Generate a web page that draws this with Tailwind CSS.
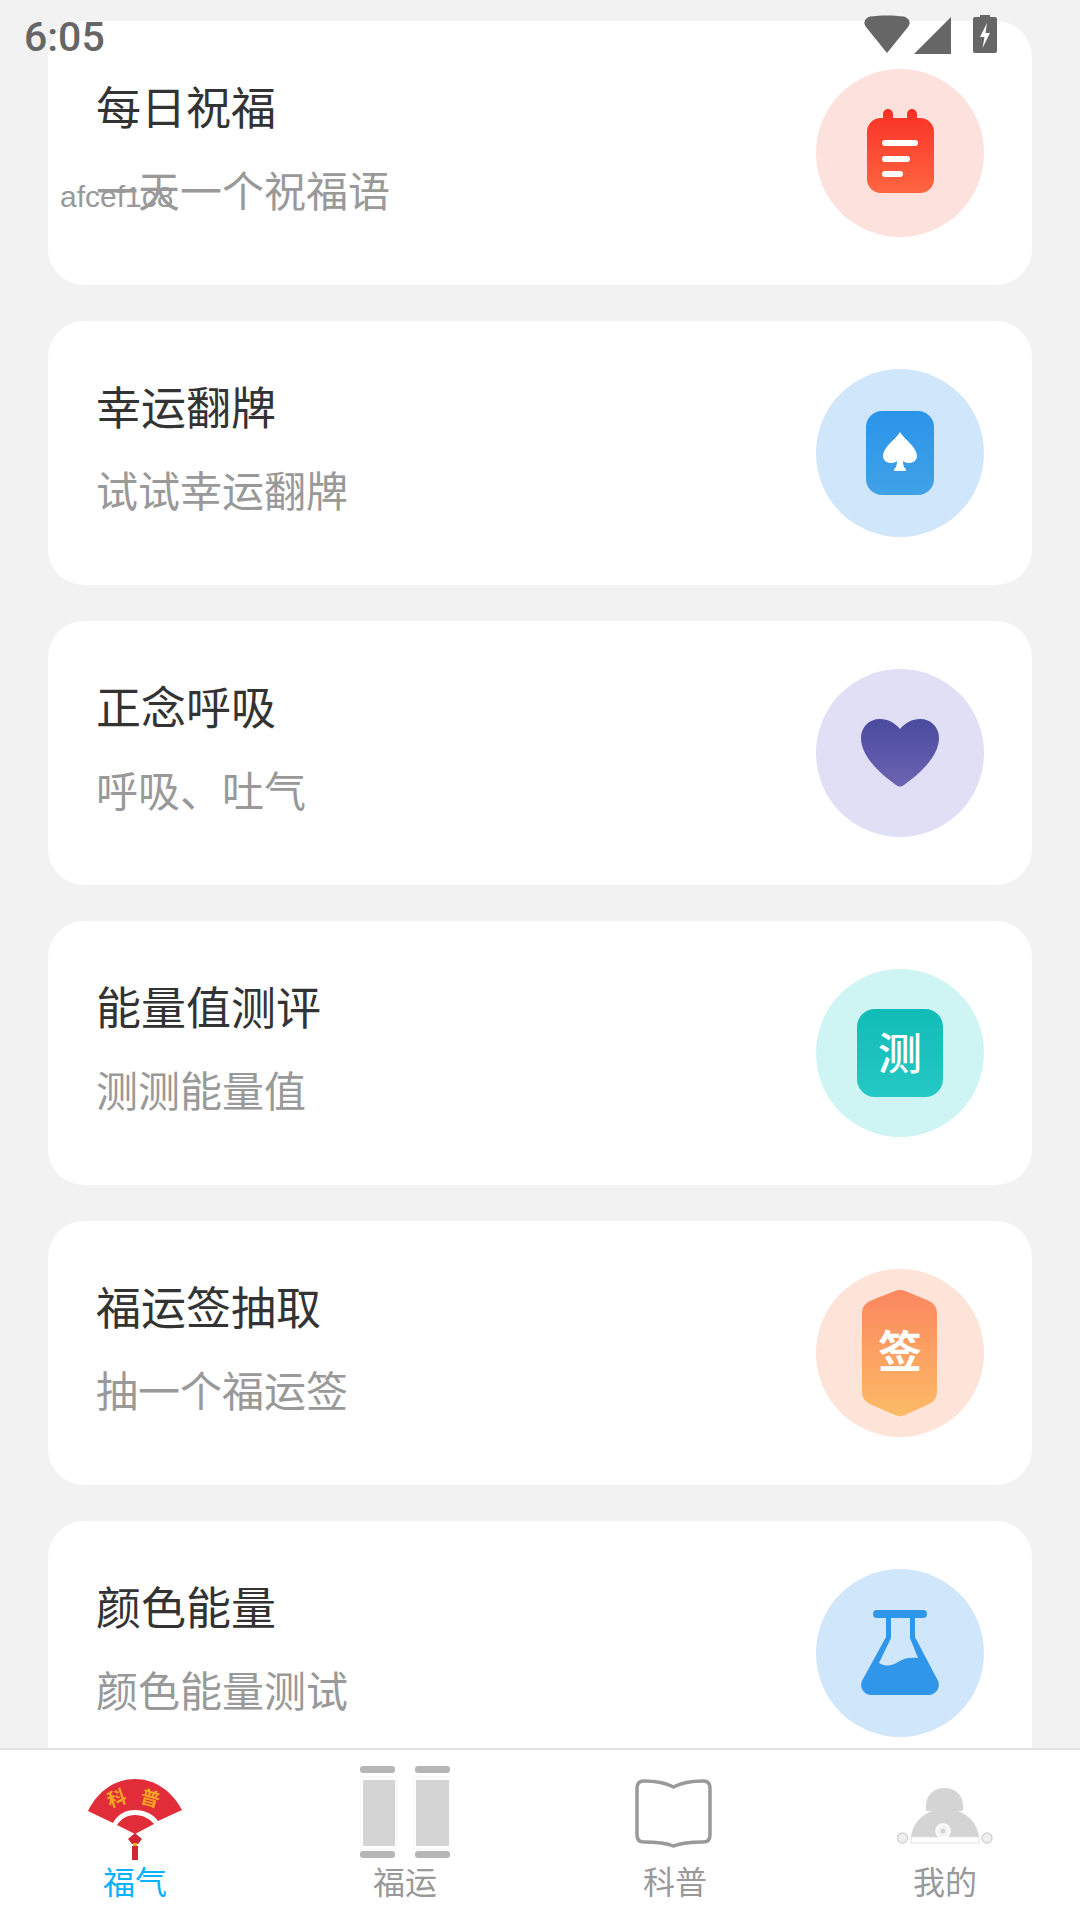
<!DOCTYPE html>
<html lang="zh-CN">
<head>
<meta charset="utf-8">
<title>福气</title>
<script src="https://cdn.jsdelivr.net/npm/@tailwindcss/browser@4"></script>
</head>
<body class="bg-[#f2f2f2] font-['Noto_Sans_CJK_SC',sans-serif]">
<div class="relative flex flex-col w-[1080px] h-[1920px] overflow-hidden">

  <!-- status bar, floats over the list -->
  <div class="absolute top-0 left-0 z-10 w-full h-[70px]">
    <span class="absolute left-[24px] top-[12px] text-[41px] leading-[50px] font-medium text-[#666] font-['Roboto',sans-serif]">6:05</span>
    <svg class="absolute left-[860px] top-[12px]" width="142" height="46" viewBox="0 0 142 46" fill="#666">
      <path d="M27 41 L6 15 C2.500 10 5 6.500 10 4.500 C20 3 34 3 44 4.500 C49 6.500 51.500 10 48 15 Z"/>
      <path d="M91 5 V42 H54 Z"/>
      <path d="M115 5 h5 v-2 h10 v2 h5 a2 2 0 0 1 2 2 v32 a2 2 0 0 1 -2 2 h-20 a2 2 0 0 1 -2 -2 v-32 a2 2 0 0 1 2 -2 Z"/>
      <path d="M127 11 L120 25 H124.500 L122.500 36 L130 21 H125.500 Z" fill="#fff"/>
    </svg>
  </div>

  <!-- list -->
  <main class="flex-1 min-h-0 overflow-hidden flex flex-col gap-[36px] pt-[21px] px-[48px]">

    <section class="relative shrink-0 h-[264px] bg-white rounded-[36px] flex items-center justify-between pr-[48px] pl-[48px]">
      <div class="self-start pt-[55px]">
        <h3 class="text-[45px] leading-[60px] text-[#333]">每日祝福</h3>
        <p class="mt-[23px] text-[42px] leading-[60px] text-[#999]">一天一个祝福语</p>
      </div>
      <span class="absolute left-[12px] top-[158px] text-[30px] leading-[36px] text-[#999] font-['Liberation_Sans',sans-serif]">afcef1c8</span>
      <svg class="shrink-0" width="168" height="168" viewBox="0 0 168 168">
        <defs><linearGradient id="red" x1="0" y1="0" x2="0" y2="1"><stop offset="0" stop-color="#f93026"/><stop offset="1" stop-color="#ff6640"/></linearGradient></defs>
        <circle cx="84" cy="84" r="84" fill="#fde1dc"/>
        <path d="M67 49 V45 a5 5 0 0 1 10 0 V49 H91 V45 a5 5 0 0 1 10 0 V49 H104 a14 14 0 0 1 14 14 V110 a14 14 0 0 1 -14 14 H65 a14 14 0 0 1 -14 -14 V63 a14 14 0 0 1 14 -14 Z" fill="url(#red)"/>
        <rect x="66" y="71" width="36" height="6" rx="3" fill="#fff"/>
        <rect x="66" y="87" width="28" height="6" rx="3" fill="#fff"/>
        <rect x="66" y="102" width="21" height="6" rx="3" fill="#fff"/>
      </svg>
    </section>

    <section class="shrink-0 h-[264px] bg-white rounded-[36px] flex items-center justify-between pr-[48px] pl-[48px]">
      <div class="self-start pt-[55px]">
        <h3 class="text-[45px] leading-[60px] text-[#333]">幸运翻牌</h3>
        <p class="mt-[23px] text-[42px] leading-[60px] text-[#999]">试试幸运翻牌</p>
      </div>
      <svg class="shrink-0" width="168" height="168" viewBox="0 0 168 168">
        <defs><linearGradient id="blue" x1="0" y1="0" x2="0" y2="1"><stop offset="0" stop-color="#2b94ea"/><stop offset="1" stop-color="#40a2e6"/></linearGradient></defs>
        <circle cx="84" cy="84" r="84" fill="#cfe6fb"/>
        <rect x="50" y="42" width="68" height="84" rx="16" fill="url(#blue)"/>
        <path d="M84 63 C88 70 101 78 101 87 C101 94 92 96 87 92 C87 96 88 99 90 100 V102 H78 V100 C80 99 81 96 81 92 C76 96 67 94 67 87 C67 78 80 70 84 63 Z" fill="#fff"/>
      </svg>
    </section>

    <section class="shrink-0 h-[264px] bg-white rounded-[36px] flex items-center justify-between pr-[48px] pl-[48px]">
      <div class="self-start pt-[55px]">
        <h3 class="text-[45px] leading-[60px] text-[#333]">正念呼吸</h3>
        <p class="mt-[23px] text-[42px] leading-[60px] text-[#999]">呼吸、吐气</p>
      </div>
      <svg class="shrink-0" width="168" height="168" viewBox="0 0 168 168">
        <defs><linearGradient id="violet" x1="0" y1="0" x2="0" y2="1"><stop offset="0" stop-color="#4a4a9e"/><stop offset="1" stop-color="#6c64b2"/></linearGradient></defs>
        <circle cx="84" cy="84" r="84" fill="#e0dff5"/>
        <path d="M84 60 C79 54 72 50 64 50 C53 50 45 58 45 69 C45 88 66 106 80 116 C83 118 85 118 88 116 C102 106 123 88 123 69 C123 58 115 50 104 50 C96 50 89 54 84 60 Z" fill="url(#violet)"/>
      </svg>
    </section>

    <section class="shrink-0 h-[264px] bg-white rounded-[36px] flex items-center justify-between pr-[48px] pl-[48px]">
      <div class="self-start pt-[55px]">
        <h3 class="text-[45px] leading-[60px] text-[#333]">能量值测评</h3>
        <p class="mt-[23px] text-[42px] leading-[60px] text-[#999]">测测能量值</p>
      </div>
      <div class="shrink-0 w-[168px] h-[168px] rounded-full bg-[#cff4f4] flex items-center justify-center">
        <div class="w-[86px] h-[88px] rounded-[18px] bg-gradient-to-b from-[#10bcb7] to-[#24c8c4] flex items-center justify-center text-white text-[44px] leading-none font-medium pb-[4px]">测</div>
      </div>
    </section>

    <section class="shrink-0 h-[264px] bg-white rounded-[36px] flex items-center justify-between pr-[48px] pl-[48px]">
      <div class="self-start pt-[55px]">
        <h3 class="text-[45px] leading-[60px] text-[#333]">福运签抽取</h3>
        <p class="mt-[23px] text-[42px] leading-[60px] text-[#999]">抽一个福运签</p>
      </div>
      <svg class="shrink-0" width="168" height="168" viewBox="0 0 168 168">
        <defs><linearGradient id="orange" x1="0" y1="0" x2="0" y2="1"><stop offset="0" stop-color="#fb875f"/><stop offset="1" stop-color="#fcbb66"/></linearGradient></defs>
        <circle cx="84" cy="84" r="84" fill="#fde3d8"/>
        <path d="M79 22 C82 20.500 86 20.500 89 22 L111 31 C118 34 121 38 121 45 V122 C121 129 118 133 111 136 L89 146 C86 147.500 82 147.500 79 146 L56 136 C49 133 46 129 46 122 V45 C46 38 49 34 56 31 Z" fill="url(#orange)"/>
        <text x="84" y="99" text-anchor="middle" font-size="44" font-weight="700" fill="#fff">签</text>
      </svg>
    </section>

    <section class="shrink-0 h-[264px] bg-white rounded-[36px] flex items-center justify-between pr-[48px] pl-[48px]">
      <div class="self-start pt-[55px]">
        <h3 class="text-[45px] leading-[60px] text-[#333]">颜色能量</h3>
        <p class="mt-[23px] text-[42px] leading-[60px] text-[#999]">颜色能量测试</p>
      </div>
      <svg class="shrink-0" width="168" height="168" viewBox="0 0 168 168">
        <circle cx="84" cy="84" r="84" fill="#cfe6fb"/>
        <rect x="57" y="41" width="54" height="8" rx="4" fill="#2f96ea"/>
        <path d="M70 47 H75 V69 L63 94 C70 98 76 97 82 93 C88 89 94 88 102 89 L94 69 V47 H99 V68 L121 110 C126 118 120 126 112 126 H56 C48 126 42 118 47 110 L70 68 Z" fill="#2f96ea"/>
      </svg>
    </section>
  </main>

  <!-- bottom tabs -->
  <nav class="shrink-0 h-[172px] bg-white border-t-2 border-[#e0e0e0] grid grid-cols-4">

    <a class="relative flex flex-col items-center">
      <svg class="absolute left-[88px] top-[29px]" width="95" height="82" viewBox="0 0 95 82">
        <path d="M0 32 C10 12 27 0 47 0 C67 0 84 12 94 31 L70 42 C65 35 57 31 47 31 C37 31 30 35 25 44 Z" fill="#e02d39"/>
        <path d="M29 46 C33 40 39 36 47 36 C55 36 62 40 66 45 L47 55 Z" fill="#e02d39"/>
        <path d="M47 54 L54 60 L50 65 H44 L40 60 Z" fill="#cf2733"/>
        <rect x="45" y="64" width="4" height="4" fill="#f0a83a"/>
        <rect x="44" y="67" width="6" height="14" fill="#cf2733"/>
        <text x="29" y="26" text-anchor="middle" font-size="19" font-weight="700" fill="#f6a623" transform="rotate(-18 29 20)">科</text>
        <text x="62" y="26" text-anchor="middle" font-size="19" font-weight="700" fill="#f6a623" transform="rotate(16 62 20)">普</text>
      </svg>
      <span class="mt-[106px] text-[32px] leading-[48px] text-[#0ab1ff]">福气</span>
    </a>

    <a class="relative flex flex-col items-center">
      <svg class="absolute left-[90px] top-[16px]" width="90" height="92" viewBox="0 0 90 92">
        <rect x="0" y="0" width="35" height="7" rx="3" fill="#b6b6b6"/>
        <rect x="0" y="85" width="35" height="7" rx="3" fill="#b6b6b6"/>
        <rect x="0" y="11" width="37" height="72" fill="none" stroke="#f8f8f8" stroke-width="1.500"/>
        <rect x="3" y="14" width="32" height="66" fill="#d4d4d4"/>
        <rect x="55" y="0" width="35" height="7" rx="3" fill="#b6b6b6"/>
        <rect x="55" y="85" width="35" height="7" rx="3" fill="#b6b6b6"/>
        <rect x="54" y="11" width="36" height="72" fill="none" stroke="#f8f8f8" stroke-width="1.500"/>
        <rect x="56" y="14" width="33" height="66" fill="#d4d4d4"/>
      </svg>
      <span class="mt-[106px] text-[32px] leading-[48px] text-[#999]">福运</span>
    </a>

    <a class="relative flex flex-col items-center">
      <svg class="absolute left-[95px] top-[29px]" width="77" height="69" viewBox="0 0 77 69">
        <path d="M38.500 8 C31 4 20 2 9 2 C4.500 2 2 4.500 2 9 V56 C2 60.500 4.500 63 9 63 C20 63 31 64 38.500 67 C46 64 57 63 68 63 C72.500 63 75 60.500 75 56 V9 C75 4.500 72.500 2 68 2 C57 2 46 4 38.500 8 Z" fill="none" stroke="#999" stroke-width="3.500"/>
      </svg>
      <span class="mt-[106px] text-[32px] leading-[48px] text-[#999]">科普</span>
    </a>

    <a class="relative flex flex-col items-center">
      <svg class="absolute left-[87px] top-[37px]" width="96" height="58" viewBox="0 0 96 58">
        <path d="M29 24 V19 C29 8 37 1 47.500 1 C58 1 66 8 66 19 V24 Z" fill="#d4d4d4"/>
        <path d="M14 50 C16 33 30 22 48 22 C66 22 80 33 82 50 Z" fill="#d4d4d4"/>
        <rect x="14" y="50" width="68" height="6" fill="#fff" stroke="#e2e2e2" stroke-width="1"/>
        <circle cx="46" cy="44" r="7" fill="#f4f4f4" stroke="#fff" stroke-width="1.500"/>
        <circle cx="46" cy="44" r="2.500" fill="#d4d4d4"/>
        <circle cx="5.500" cy="51" r="5" fill="#efefef" stroke="#d4d4d4" stroke-width="1.500"/>
        <circle cx="90" cy="51" r="5" fill="#efefef" stroke="#d4d4d4" stroke-width="1.500"/>
      </svg>
      <span class="mt-[106px] text-[32px] leading-[48px] text-[#999]">我的</span>
    </a>
  </nav>
</div>
</body>
</html>
